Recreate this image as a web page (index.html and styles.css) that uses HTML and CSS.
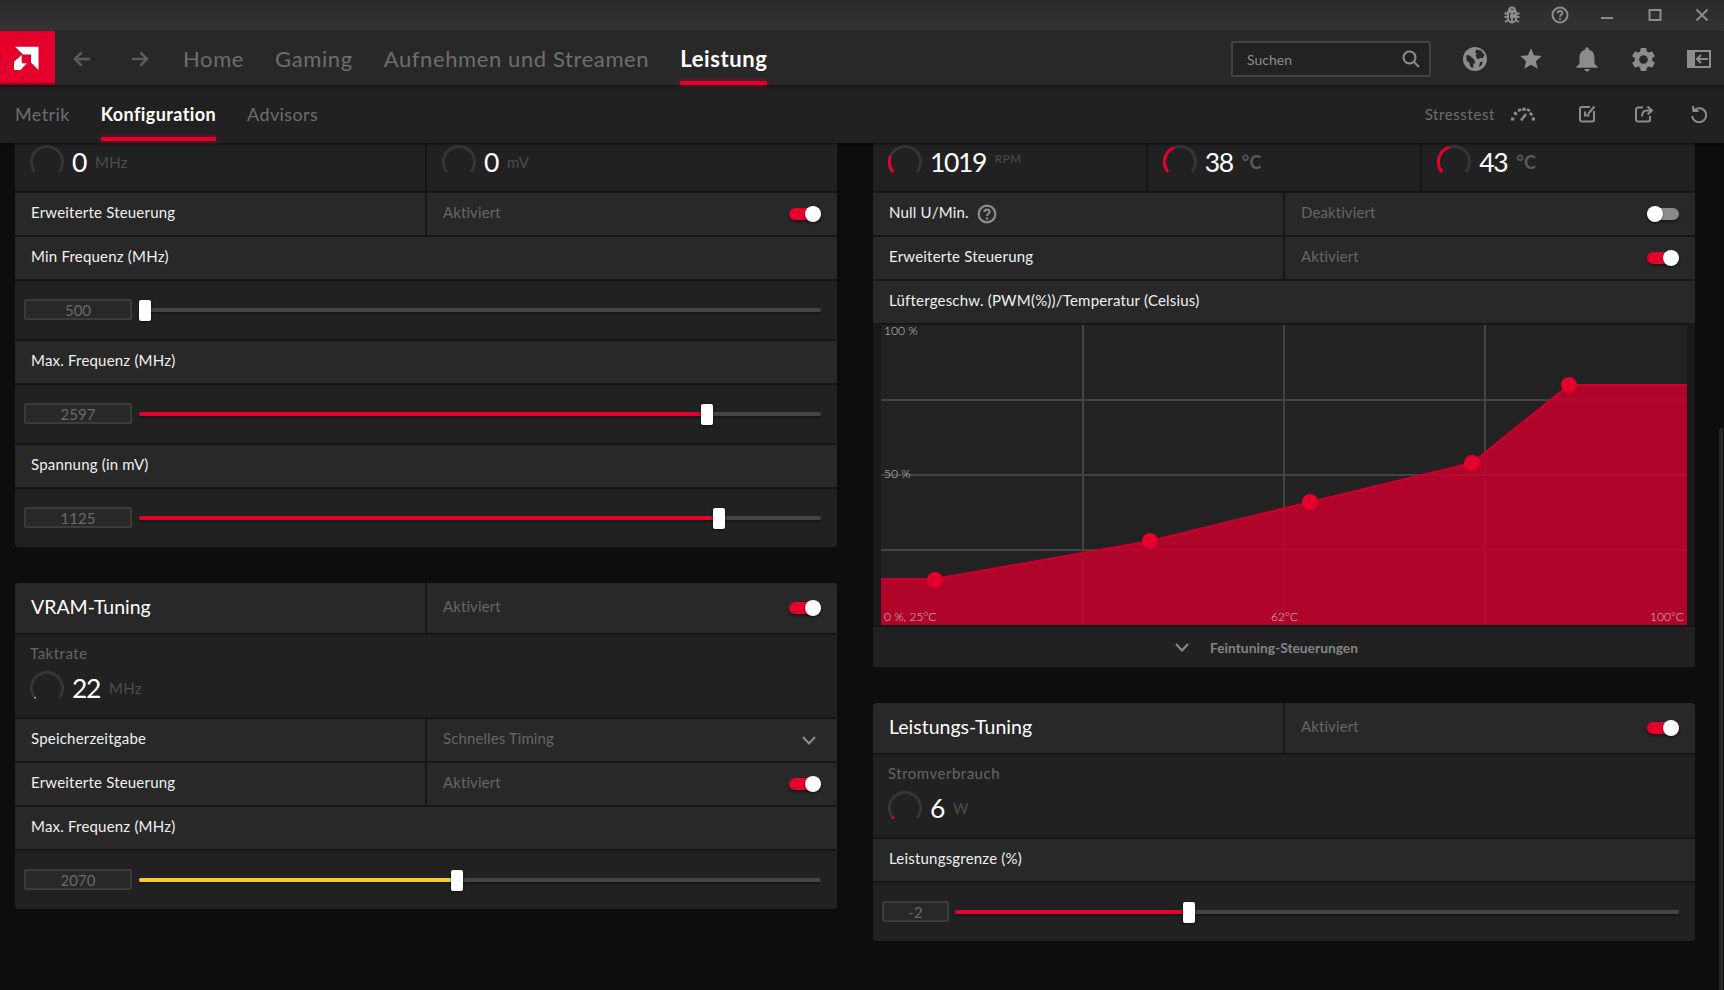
FILE: index.html
```html
<!DOCTYPE html>
<html lang="de">
<head>
<meta charset="utf-8">
<title>Leistung</title>
<link rel="stylesheet" href="styles.css">
</head>
<body>
<div class="app">
  <header class="titlebar">
    <span class="tslot"><svg class="ico" width="18" height="18" viewBox="0 0 18 18"><path class="st" d="M6 4.500c0-1.800 1.300-3 3-3s3 1.200 3 3zM5 6h8v6.500c0 2.200-1.800 4-4 4s-4-1.800-4-4zM9 6v10M5 8.500 1.500 7M13 8.500 16.500 7M5 11H1.500M13 11h3.500M5.500 14 2 16M12.500 14 16 16M7 9h1v3M10 9h1v3"/></svg></span>
    <span class="tslot"><svg class="ico" width="18" height="18" viewBox="0 0 18 18"><circle class="st" cx="9" cy="9" r="7.500"/><path class="st" d="M6.700 7.200C6.700 5.800 7.800 5 9 5s2.300.8 2.300 2.100c0 1.900-2.300 1.900-2.300 3.700"/><circle class="fl" cx="9" cy="13" r="1.100"/></svg></span>
    <span class="tslot"><svg class="ico" width="14" height="18" viewBox="0 0 14 18"><path class="st" d="M1 12h12"/></svg></span>
    <span class="tslot"><svg class="ico" width="14" height="14" viewBox="0 0 14 14"><rect class="st" x="1.500" y="2" width="11" height="10"/></svg></span>
    <span class="tslot"><svg class="ico" width="14" height="14" viewBox="0 0 14 14"><path class="st" d="M1.500 1.500l11 11M12.500 1.500l-11 11"/></svg></span>
  </header>

  <nav class="navbar">
    <a class="logo"><svg width="55" height="54" viewBox="0 0 55 54"><path class="logo-mark" d="M15 15.700H38.500V39L31 31.500V23.500H23zM14 30.700 21.700 24V32.300H26.700L20.700 39H14z"/></svg></a>
    <svg class="arrow" width="18" height="16" viewBox="0 0 18 16"><path class="st-dim" d="M17 8H2M8.500 1.500 2 8l6.500 6.500"/></svg>
    <svg class="arrow next" width="18" height="16" viewBox="0 0 18 16"><path class="st-dim" d="M1 8h15M9.500 1.500 16 8l-6.500 6.500"/></svg>
    <div class="tabs">
      <a class="tab">Home</a>
      <a class="tab">Gaming</a>
      <a class="tab">Aufnehmen und Streamen</a>
      <a class="tab active">Leistung</a>
    </div>
    <div class="search">
      <span>Suchen</span>
      <svg width="18" height="18" viewBox="0 0 18 18"><circle class="st" cx="7.500" cy="7.500" r="6"/><path class="st" d="M12 12l5 5"/></svg>
    </div>
    <div class="navicons">
      <span class="nslot"><svg width="24" height="24" viewBox="0 0 24 24"><circle class="fl" cx="12" cy="12" r="12"/><path class="land" d="M13 2.500l5 1 3.500 4.500-2 3.500-2.500-1-1 2-2-1-1.500-3 1.500-2-2-1zM3.500 8l3 .5 4.500 4 1.500 3-2 1.500-.5 4-2.500-1-1-4-3-2.500zM17 15l3-.5-1.500 4-2.500 1.500z"/></svg></span>
      <span class="nslot"><svg width="26" height="26" viewBox="0 0 24 24"><path class="fl" d="M12 17.270L18.180 21l-1.640-7.030L22 9.240l-7.190-.61L12 2 9.190 8.630 2 9.240l5.460 4.730L5.820 21z"/></svg></span>
      <span class="nslot"><svg width="30" height="30" viewBox="0 0 24 24"><path class="fl" d="M12 22c1.100 0 2-.9 2-2h-4c0 1.100.9 2 2 2zm6-6v-5c0-3.070-1.630-5.640-4.500-6.320V4c0-.83-.67-1.500-1.500-1.500s-1.500.67-1.500 1.500v.68C7.640 5.360 6 7.920 6 11v5l-2.500 2v1h17v-1l-2.500-2z"/></svg></span>
      <span class="nslot"><svg width="29" height="29" viewBox="0 0 24 24"><path class="fl" d="M19.140 12.940c.04-.3.06-.61.06-.94 0-.32-.02-.64-.07-.94l2.030-1.580c.18-.14.23-.41.12-.61l-1.920-3.320c-.12-.22-.37-.29-.59-.22l-2.390.96c-.5-.38-1.030-.7-1.620-.94l-.36-2.540c-.04-.24-.24-.41-.48-.41h-3.840c-.24 0-.43.17-.47.41l-.36 2.540c-.59.24-1.130.57-1.620.94l-2.390-.96c-.22-.08-.47 0-.59.22L2.740 8.870c-.12.21-.08.47.12.61l2.030 1.580c-.05.3-.09.63-.09.94s.02.64.07.94l-2.030 1.580c-.18.14-.23.41-.12.61l1.920 3.320c.12.22.37.29.59.22l2.390-.96c.5.38 1.030.7 1.620.94l.36 2.54c.05.24.24.41.48.41h3.840c.24 0 .44-.17.47-.41l.36-2.540c.59-.24 1.130-.56 1.620-.94l2.390.96c.22.08.47 0 .59-.22l1.920-3.320c.12-.22.07-.47-.12-.61l-2.010-1.580zM12 15.600c-1.980 0-3.600-1.620-3.600-3.600s1.620-3.600 3.600-3.600 3.600 1.620 3.600 3.600-1.620 3.600-3.600 3.600z"/></svg></span>
      <span class="nslot"><svg width="24" height="18" viewBox="0 0 24 18"><path class="fl" d="M0 0H24V18H0zM8 2V16H22V2z"/><path class="st" d="M21 9H10M14 5 10 9l4 4"/></svg></span>
    </div>
  </nav>

  <div class="subnav">
    <div class="subtabs">
      <a class="subtab">Metrik</a>
      <a class="subtab active">Konfiguration</a>
      <a class="subtab">Advisors</a>
    </div>
    <div class="subtools">
      <span class="stress">Stresstest</span>
      <svg class="tool-gauge" width="24" height="14" viewBox="0 0 24 14"><path class="dash" d="M1.500 13.500V10.500M3.500 7.500 5.500 5.500M8 1.800l1 2.500M13 .8v3M18 2l-1.200 2.200M21 6 19 8M22.500 13.500V10.500"/><path class="needle" d="M10 13.500 15 7"/></svg>
      <svg class="tool" width="18" height="18" viewBox="0 0 18 18"><path class="st" d="M11 2H3a2 2 0 0 0-2 2v10.500a2 2 0 0 0 2 2h10a2 2 0 0 0 2-2V6"/><path class="st" d="M15.500 1.500 9 9M6 6.500V10.500h4.500"/></svg>
      <svg class="tool" width="18" height="18" viewBox="0 0 18 18"><path class="st" d="M8 2.500H3a2 2 0 0 0-2 2v10a2 2 0 0 0 2 2h10a2 2 0 0 0 2-2V11"/><path class="st" d="M12.500 1.500 17 5.500 12.500 9.500M17 5.500H12c-3 0-5 2-5 6"/></svg>
      <svg class="tool" width="16" height="18" viewBox="0 0 16 18"><path class="st" d="M3 5.500A7 7 0 1 1 1.200 11M2 1l.5 5h5"/></svg>
    </div>
  </div>

  <main class="content">
    <div class="column">
      <section class="panel clipped">
        <div class="row stat-row">
          <div class="stat wide"><svg class="gauge" width="34" height="34" viewBox="0 0 34 34"><path class="g-bg" d="M5 27A15.600 15.600 0 1 1 29 27"/></svg><span class="val">0</span><span class="unit">MHz</span></div>
          <div class="stat fill"><svg class="gauge" width="34" height="34" viewBox="0 0 34 34"><path class="g-bg" d="M5 27A15.600 15.600 0 1 1 29 27"/></svg><span class="val">0</span><span class="unit">mV</span></div>
        </div>
        <div class="row">
          <div class="label">Erweiterte Steuerung</div>
          <div class="value"><span>Aktiviert</span><span class="toggle on"></span></div>
        </div>
        <div class="row"><div class="label">Min Frequenz (MHz)</div></div>
        <div class="slider">
          <span class="num">500</span>
          <div class="track"><span class="thumb" style="left:0"></span></div>
        </div>
        <div class="row"><div class="label">Max. Frequenz (MHz)</div></div>
        <div class="slider">
          <span class="num">2597</span>
          <div class="track"><span class="bar" style="width:83.3%"></span><span class="thumb" style="left:83.3%"></span></div>
        </div>
        <div class="row"><div class="label">Spannung (in mV)</div></div>
        <div class="slider">
          <span class="num">1125</span>
          <div class="track"><span class="bar" style="width:85%"></span><span class="thumb" style="left:85%"></span></div>
        </div>
      </section>

      <section class="panel">
        <div class="row head">
          <div class="label title">VRAM-Tuning</div>
          <div class="value"><span>Aktiviert</span><span class="toggle on"></span></div>
        </div>
        <div class="metric">
          <div class="metric-name">Taktrate</div>
          <div class="stat-line"><svg class="gauge" width="34" height="34" viewBox="0 0 34 34"><path class="g-bg" d="M5 27A15.600 15.600 0 1 1 29 27"/><path class="g-yellow" d="M5.500 27.500 4.800 26"/></svg><span class="val">22</span><span class="unit">MHz</span></div>
        </div>
        <div class="row">
          <div class="label">Speicherzeitgabe</div>
          <div class="value"><span>Schnelles Timing</span><svg class="chev" width="14" height="9" viewBox="0 0 14 9"><path class="st" d="M1 1l6 6.500L13 1"/></svg></div>
        </div>
        <div class="row">
          <div class="label">Erweiterte Steuerung</div>
          <div class="value"><span>Aktiviert</span><span class="toggle on"></span></div>
        </div>
        <div class="row"><div class="label">Max. Frequenz (MHz)</div></div>
        <div class="slider">
          <span class="num">2070</span>
          <div class="track"><span class="bar yellow" style="width:46.7%"></span><span class="thumb" style="left:46.7%"></span></div>
        </div>
      </section>
    </div>

    <div class="column">
      <section class="panel clipped">
        <div class="row stat-row">
          <div class="stat fill"><svg class="gauge" width="34" height="34" viewBox="0 0 34 34"><path class="g-bg" d="M5 27A15.600 15.600 0 1 1 29 27"/><path class="g-red" d="M5 27A15.600 15.600 0 0 1 2.500 11"/></svg><span class="val">1019</span><span class="unit small">RPM</span></div>
          <div class="stat fill"><svg class="gauge" width="34" height="34" viewBox="0 0 34 34"><path class="g-bg" d="M5 27A15.600 15.600 0 1 1 29 27"/><path class="g-red" d="M5 27A15.600 15.600 0 0 1 11 2.600"/></svg><span class="val">38</span><span class="unit temp">°C</span></div>
          <div class="stat fill"><svg class="gauge" width="34" height="34" viewBox="0 0 34 34"><path class="g-bg" d="M5 27A15.600 15.600 0 1 1 29 27"/><path class="g-red" d="M5 27A15.600 15.600 0 0 1 12.500 2.100"/></svg><span class="val">43</span><span class="unit temp">°C</span></div>
        </div>
        <div class="row">
          <div class="label">Null U/Min.<svg class="help" width="20" height="20" viewBox="0 0 18 18"><circle class="st" cx="9" cy="9" r="7.500"/><path class="st" d="M6.700 7.200C6.700 5.800 7.800 5 9 5s2.300.8 2.300 2.100c0 1.900-2.300 1.900-2.300 3.700"/><circle class="fl" cx="9" cy="13" r="1.100"/></svg></div>
          <div class="value"><span>Deaktiviert</span><span class="toggle off"></span></div>
        </div>
        <div class="row">
          <div class="label">Erweiterte Steuerung</div>
          <div class="value"><span>Aktiviert</span><span class="toggle on"></span></div>
        </div>
        <div class="row"><div class="label">Lüftergeschw. (PWM(%))/Temperatur (Celsius)</div></div>
        <div class="chart-wrap">
          <div class="chart">
            <svg width="806" height="300" viewBox="0 0 806 300">
              <path class="grid" d="M202 0V300M403 0V300M604 0V300M0 75H806M0 150H806M0 225H806"/>
              <path class="area" d="M0 300V254H54L269 216 429 177 591 138 688 60 H806V300Z"/>
              <path class="curve" d="M0 254H54L269 216 429 177 591 138 688 60H806"/>
              <circle class="pt" cx="54" cy="255" r="8"/>
              <circle class="pt" cx="269" cy="216" r="8"/>
              <circle class="pt" cx="429" cy="177" r="8"/>
              <circle class="pt" cx="591" cy="138" r="8"/>
              <circle class="pt" cx="688" cy="60" r="8"/>
            </svg>
            <span class="clabel c-top">100 %</span>
            <span class="clabel c-mid">50 %</span>
            <span class="clabel c-bl">0 %, 25°C</span>
            <span class="clabel c-bc">62°C</span>
            <span class="clabel c-br">100°C</span>
          </div>
        </div>
        <div class="fine">
          <svg width="14" height="9" viewBox="0 0 14 9"><path class="st" d="M1 1l6 6.500L13 1"/></svg>
          <span>Feintuning-Steuerungen</span>
        </div>
      </section>

      <section class="panel">
        <div class="row head">
          <div class="label title">Leistungs-Tuning</div>
          <div class="value"><span>Aktiviert</span><span class="toggle on"></span></div>
        </div>
        <div class="metric">
          <div class="metric-name">Stromverbrauch</div>
          <div class="stat-line"><svg class="gauge" width="34" height="34" viewBox="0 0 34 34"><path class="g-bg" d="M5 27A15.600 15.600 0 1 1 29 27"/><path class="g-red" d="M5.500 27.500 4.500 25.500"/></svg><span class="val">6</span><span class="unit">W</span></div>
        </div>
        <div class="row"><div class="label">Leistungsgrenze (%)</div></div>
        <div class="slider tight">
          <span class="num short">-2</span>
          <div class="track"><span class="bar" style="width:32.3%"></span><span class="thumb" style="left:32.3%"></span></div>
        </div>
      </section>
    </div>
    <div class="scrollbar"></div>
  </main>
</div>
</body>
</html>
```
FILE: styles.css
```css
* { box-sizing: border-box; }
html, body { margin: 0; height: 100%; background: #0d0d0d; }
body { font-family: Lato, "Open Sans", sans-serif; color: #fff; overflow: hidden; }
svg { display: block; flex: none; }

.st { fill: none; stroke: #8c8c8c; stroke-width: 2; }
.fl { fill: #8c8c8c; }
.st-dim { fill: none; stroke: #5c5c5c; stroke-width: 2.5; }
.land { fill: #282828; }
.dash { fill: none; stroke: #8c8c8c; stroke-width: 3.5; }
.needle { fill: none; stroke: #8c8c8c; stroke-width: 2.5; }

.app { display: flex; flex-direction: column; width: 1724px; height: 990px; overflow: hidden; }

.titlebar {
  flex: 0 0 31px; display: flex; justify-content: flex-end; align-items: center; gap: 1.5px;
  padding-bottom: 2px; background: linear-gradient(#2b2b2b, #343434);
}
.tslot { width: 46px; display: flex; justify-content: center; }
.tslot:last-child { margin-right: -1px; }

.navbar {
  flex: 0 0 54px; display: flex; align-items: center; background: #282828;
  position: relative; z-index: 3; box-shadow: 0 1px 3px rgba(0,0,0,.5);
}
.logo { width: 55px; height: 54px; background: #e4002b; border-bottom: 2px solid #a00020; flex: none; }
.logo-mark { fill: #fff; }
.arrow { margin: 2px 0 0 18px; }
.arrow.next { margin-left: 40px; }
.tabs { display: flex; height: 100%; gap: 31px; margin-left: 34px; }
.tab {
  position: relative; display: flex; align-items: center;
  font-size: 22px; letter-spacing: .6px; color: #6e6e6e; white-space: nowrap;
}
.tab.active { color: #fff; font-weight: 700; }
.tab.active::after, .subtab.active::after {
  content: ""; position: absolute; left: 0; right: 0; bottom: 0; height: 4px;
  background: #e4002b; box-shadow: 0 0 5px rgba(228,0,43,.6);
}
.search {
  margin: 2px 0 0 auto; width: 200px; height: 36px; display: flex; align-items: center;
  justify-content: space-between; padding: 0 9px 0 14px; background: #222; border: 2px solid #434343;
  border-radius: 2px; font-size: 14px; color: #8c8c8c;
}
.navicons { display: flex; gap: 6px; margin: 2px 0 0 19px; }
.nslot { width: 50px; display: flex; justify-content: center; align-items: center; height: 30px; }

.subnav {
  flex: 0 0 58px; display: flex; align-items: center; justify-content: space-between;
  background: #212121; position: relative; z-index: 2; box-shadow: 0 1px 3px rgba(0,0,0,.5);
}
.subtabs { display: flex; height: 100%; gap: 31px; margin-left: 15px; }
.subtab {
  position: relative; display: flex; align-items: center;
  font-size: 18px; letter-spacing: .4px; color: #6e6e6e;
}
.subtab.active { color: #fff; font-weight: 700; }
.subtab.active::after { bottom: 2px; }
.subtools { display: flex; align-items: center; gap: 38px; margin-right: 17px; }
.stress { font-size: 15px; letter-spacing: .6px; color: #6e6e6e; margin-right: -22px; }
.tool-gauge { margin-right: 6px; }

.content {
  position: relative; flex: 1; min-height: 0; overflow: hidden;
  display: grid; grid-template-columns: 822px 822px; column-gap: 36px; padding-left: 15px;
  align-content: start;
}
.column { display: flex; flex-direction: column; gap: 36px; }
.panel { display: flex; flex-direction: column; gap: 2px; background: #161616; border-radius: 3px; overflow: hidden; }
.panel.clipped { border-radius: 0 0 3px 3px; }

.row { display: flex; gap: 2px; height: 42px; font-size: 15px; }
.row.head { height: 50px; }
.row.stat-row { height: 48px; }
.label {
  flex: 1 0 410px; display: flex; align-items: center; padding: 0 0 4px 16px;
  background: #282828; color: #f0f0f0; letter-spacing: .2px;
}
.row .label:not(:last-child) { flex: 0 0 410px; }
.label.title { font-size: 19.5px; color: #fff; padding-bottom: 3px; letter-spacing: 0; }
.value {
  flex: 1; display: flex; align-items: center; justify-content: space-between;
  padding: 0 16px; background: #282828; color: #666; letter-spacing: .1px;
}
.value > span:first-child { margin-bottom: 4px; }
.help { margin-left: 8px; margin-top: 3px; }
.chev { margin-right: 5px; }

.toggle {
  position: relative; width: 32px; height: 12px; border-radius: 6px; margin-bottom: 1px;
  box-shadow: 0 2px 3px rgba(0,0,0,.4);
}
.toggle::after {
  content: ""; position: absolute; top: -2px; width: 16px; height: 16px; border-radius: 50%;
  background: #fff; box-shadow: 0 1px 2px rgba(0,0,0,.5);
}
.toggle.on { background: #e4002b; }
.toggle.on::after { right: 0; }
.toggle.off { background: #8a8a8a; }
.toggle.off::after { left: 0; }

.stat { display: flex; align-items: flex-start; background: #212121; padding: 2px 0 0 15px; }
.stat.wide { flex: 0 0 410px; }
.stat.fill { flex: 1; }
.gauge { margin-right: 8px; }
.g-bg { fill: none; stroke: #353535; stroke-width: 3; }
.g-red { fill: none; stroke: #e4002b; stroke-width: 3; }
.g-yellow { fill: none; stroke: #ffcb2e; stroke-width: 1.5; }
.val { font-size: 26.5px; line-height: 34px; letter-spacing: -1.4px; color: #fff; }
.unit { font-size: 15px; line-height: 34px; color: #4d4d4d; margin-left: 9px; letter-spacing: .3px; }
.unit.small { font-size: 11.5px; line-height: 28px; letter-spacing: .6px; }
.unit.temp { font-size: 18px; font-weight: 700; color: #5a5a5a; }

.metric { height: 82px; background: #212121; padding: 9px 0 0 15px; }
.metric-name { font-size: 15px; line-height: 18px; color: #666; margin-bottom: 9px; letter-spacing: .5px; }
.stat-line { display: flex; }

.slider {
  height: 58px; display: flex; align-items: center; gap: 7px; padding: 0 16px 0 9px; background: #212121;
}
.num {
  flex: 0 0 108px; height: 21px; margin-bottom: 1px; display: flex; align-items: center; justify-content: center;
  background: #282828; border: 2px solid #3c3c3c; border-radius: 2px;
  font-size: 15px; color: #6a6a6a;
}
.num.short { flex-basis: 67px; }
.slider.tight { gap: 6px; }
.track { position: relative; flex: 1; height: 4px; background: #444; border-radius: 2px; box-shadow: 0 2px 2px rgba(0,0,0,.3); }
.bar { display: block; height: 100%; background: #e4002b; border-radius: 2px; }
.bar.yellow { background: #ffcb2e; }
.thumb {
  position: absolute; top: -8.5px; width: 12px; height: 21px; margin-left: -6px;
  background: #fff; border-radius: 2px; box-shadow: 0 1px 3px rgba(0,0,0,.5);
}
.thumb[style="left:0"] { margin-left: 0; }

.chart-wrap { background: #1a1a1a; padding: 0 8px; }
.chart { position: relative; width: 806px; height: 300px; background: #222; }
.grid { fill: none; stroke: #444; stroke-width: 2; }
.area { fill: #c8002d; fill-opacity: .86; }
.curve { fill: none; stroke: #c8002d; stroke-width: 2; }
.pt { fill: #e4002b; }
.clabel { position: absolute; font-size: 12px; font-weight: 300; line-height: 14px; color: #c8c8c8; white-space: nowrap; }
.c-top { left: 3px; top: -1px; }
.c-mid { left: 3px; top: 142px; }
.c-bl { left: 3px; bottom: 1px; }
.c-bc { left: 390px; bottom: 1px; }
.c-br { right: 3px; bottom: 1px; }
.fine {
  height: 40px; display: flex; align-items: center; justify-content: center; gap: 21px;
  background: #212121; font-size: 13.8px; font-weight: 700; color: #858585; padding-right: 35px;
}

.scrollbar { position: absolute; right: 1px; top: 285px; bottom: 0; width: 4px; border-radius: 2px 2px 0 0; background: #262626; }
```
